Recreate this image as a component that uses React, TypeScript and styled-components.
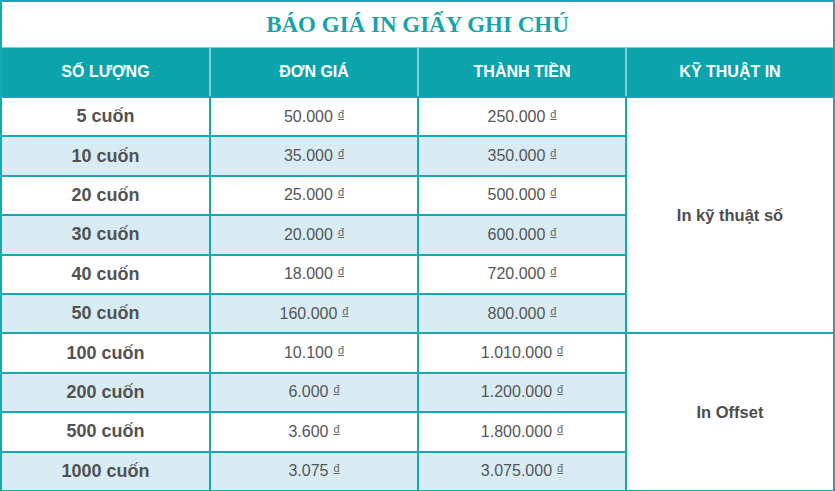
import styled, { createGlobalStyle } from "styled-components";

const GlobalStyle = createGlobalStyle`
  html, body {
    margin: 0;
    padding: 0;
    background: #ffffff;
  }
`;

type Row = { qty: string; unit: string; total: string };

const digitalRows: Row[] = [
  { qty: "5 cuốn", unit: "50.000", total: "250.000" },
  { qty: "10 cuốn", unit: "35.000", total: "350.000" },
  { qty: "20 cuốn", unit: "25.000", total: "500.000" },
  { qty: "30 cuốn", unit: "20.000", total: "600.000" },
  { qty: "40 cuốn", unit: "18.000", total: "720.000" },
  { qty: "50 cuốn", unit: "160.000", total: "800.000" },
];

const offsetRows: Row[] = [
  { qty: "100 cuốn", unit: "10.100", total: "1.010.000" },
  { qty: "200 cuốn", unit: "6.000", total: "1.200.000" },
  { qty: "500 cuốn", unit: "3.600", total: "1.800.000" },
  { qty: "1000 cuốn", unit: "3.075", total: "3.075.000" },
];

function Price({ value }: { value: string }) {
  return (
    <>
      {value}
      <Dong>đ</Dong>
    </>
  );
}

export default function App() {
  const groups = [
    { label: "In kỹ thuật số", rows: digitalRows },
    { label: "In Offset", rows: offsetRows },
  ];
  let index = 0;

  return (
    <>
      <GlobalStyle />
      <Table>
        <colgroup>
          <col style={{ width: "209px" }} />
          <col style={{ width: "208px" }} />
          <col style={{ width: "208px" }} />
          <col />
        </colgroup>
        <thead>
          <tr>
            <TitleCell colSpan={4}>BÁO GIÁ IN GIẤY GHI CHÚ</TitleCell>
          </tr>
          <tr>
            <HeadCell>SỐ LƯỢNG</HeadCell>
            <HeadCell>ĐƠN GIÁ</HeadCell>
            <HeadCell>THÀNH TIỀN</HeadCell>
            <HeadCell>KỸ THUẬT IN</HeadCell>
          </tr>
        </thead>
        <tbody>
          {groups.map((group) =>
            group.rows.map((row, i) => {
              const shaded = index++ % 2 === 1;
              return (
                <tr key={row.qty}>
                  <QtyCell $shaded={shaded}>{row.qty}</QtyCell>
                  <PriceCell $shaded={shaded}>
                    <Price value={row.unit} />
                  </PriceCell>
                  <PriceCell $shaded={shaded}>
                    <Price value={row.total} />
                  </PriceCell>
                  {i === 0 && (
                    <MethodCell rowSpan={group.rows.length}>{group.label}</MethodCell>
                  )}
                </tr>
              );
            })
          )}
        </tbody>
      </Table>
    </>
  );
}

const teal = "#17a8b0";

const Table = styled.table`
  width: 835px;
  height: 491px;
  border-collapse: collapse;
  table-layout: fixed;
  border: 2px solid ${teal};
  font-family: "Liberation Sans", Arial, sans-serif;
  color: #555555;
  tbody tr {
    height: 39.4px;
  }
`;

const TitleCell = styled.th`
  height: 45px;
  padding: 0;
  background: #ffffff;
  color: #17a3aa;
  font-family: "Liberation Serif", "Times New Roman", serif;
  font-size: 23px;
  font-weight: bold;
  text-align: center;
  vertical-align: middle;
  border-bottom: 1px solid #7dd0d4;
`;

const HeadCell = styled.th`
  height: 48px;
  padding: 0;
  background: #0ba4ad;
  color: #ffffff;
  font-size: 16px;
  font-weight: bold;
  text-align: center;
  vertical-align: middle;
  border-left: 2px solid #7fd0d4;
  border-bottom: 2px solid ${teal};
  &:first-child {
    border-left: 2px solid ${teal};
  }
`;

const BodyCell = styled.td<{ $shaded?: boolean }>`
  padding: 0;
  text-align: center;
  vertical-align: middle;
  border: 2px solid ${teal};
  background: ${(p) => (p.$shaded ? "#d9ecf3" : "#ffffff")};
`;

const QtyCell = styled(BodyCell)`
  font-size: 18px;
  font-weight: bold;
  color: #525252;
`;

const PriceCell = styled(BodyCell)`
  font-size: 16px;
  color: #555555;
`;

const MethodCell = styled(BodyCell)`
  font-size: 16.5px;
  font-weight: bold;
  color: #4d4d4d;
`;

const Dong = styled.span`
  display: inline-block;
  margin-left: 5px;
  font-size: 11px;
  line-height: 1;
  vertical-align: 4px;
  text-decoration: underline;
  color: #666666;
`;
